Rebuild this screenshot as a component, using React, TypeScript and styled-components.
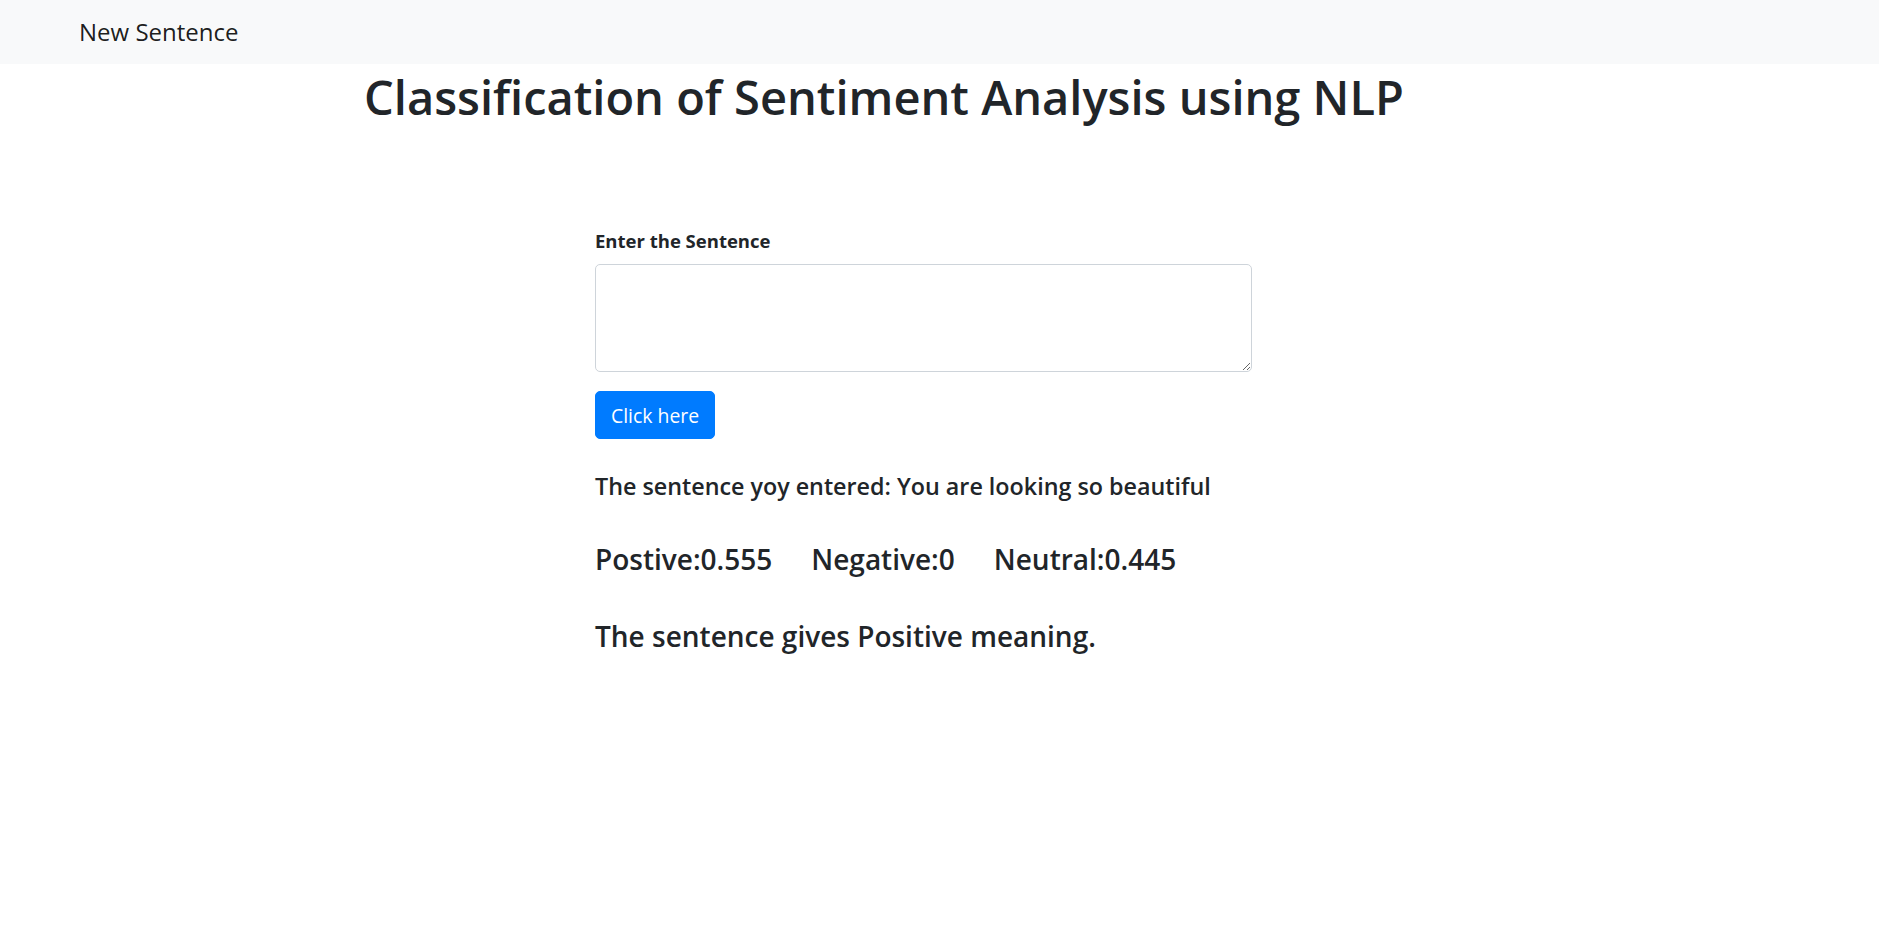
import styled, { createGlobalStyle } from "styled-components"

const GlobalStyle = createGlobalStyle`
  body {
    margin: 0;
    background: #ffffff;
    font-family: "Open Sans", "Noto Sans", sans-serif;
    color: #212529;
  }
`

const Navbar = styled.nav({
  height: "64px",
  background: "#f8f9fa",
  display: "flex",
  alignItems: "center",
  paddingLeft: "79px",
})

const Brand = styled.a({
  fontSize: "24px",
  color: "rgba(0, 0, 0, 0.9)",
  textDecoration: "none",
  lineHeight: "30px",
})

const Title = styled.h1({
  margin: "3px 0 0 0",
  paddingLeft: "364px",
  fontSize: "47px",
  fontWeight: 600,
  lineHeight: "60px",
  color: "#212529",
})

const Form = styled.form({
  marginLeft: "595px",
  marginTop: "100px",
  width: "657px",
  display: "flex",
  flexDirection: "column",
  alignItems: "flex-start",
})

const Label = styled.label({
  fontSize: "18.5px",
  fontWeight: 700,
  lineHeight: "27px",
  marginBottom: "10px",
})

const TextArea = styled.textarea({
  boxSizing: "border-box",
  width: "100%",
  height: "108px",
  border: "1px solid #ced4da",
  borderRadius: "5px",
  padding: "7px 15px",
  fontFamily: "inherit",
  fontSize: "20px",
  outline: "none",
})

const Button = styled.button({
  marginTop: "19px",
  height: "48px",
  padding: "0 15px",
  background: "#007bff",
  color: "#ffffff",
  border: "1px solid #007bff",
  borderRadius: "5px",
  fontFamily: "inherit",
  fontSize: "19.4px",
  cursor: "pointer",
})

const Entered = styled.h5<{ $top: number }>`
  margin: ${(p) => p.$top}px 0 0 0;
  font-size: 23.3px;
  font-weight: 600;
  line-height: 30px;
`

const Result = styled.h4<{ $top: number }>`
  margin: ${(p) => p.$top}px 0 0 0;
  font-size: 28px;
  font-weight: 600;
  line-height: 36px;
  display: flex;
  gap: 39px;
`

const results = [
  { name: "Postive", value: 0.555 },
  { name: "Negative", value: 0 },
  { name: "Neutral", value: 0.445 },
]

const App = () => {
  return (
    <>
      <GlobalStyle />
      <Navbar>
        <Brand href="#">New Sentence</Brand>
      </Navbar>
      <Title>Classification of Sentiment Analysis using NLP</Title>
      <Form onSubmit={(e) => e.preventDefault()}>
        <Label htmlFor="sentence">Enter the Sentence</Label>
        <TextArea id="sentence" name="sentence" />
        <Button type="submit">Click here</Button>
        <Entered $top={32}>The sentence yoy entered: You are looking so beautiful</Entered>
        <Result $top={40}>
          {results.map((r) => (
            <span key={r.name}>
              {r.name}:{r.value}
            </span>
          ))}
        </Result>
        <Result $top={41}>The sentence gives Positive meaning.</Result>
      </Form>
    </>
  )
}

export default App
